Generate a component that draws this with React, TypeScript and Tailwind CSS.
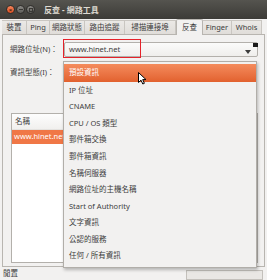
import React from "react";

const tabs = [
  { label: "裝置", w: 25 },
  { label: "Ping", w: 23 },
  { label: "網路狀態", w: 35 },
  { label: "路由追蹤", w: 40 },
  { label: "掃描連接埠", w: 51 },
  { label: "反查", w: 27, active: true },
  { label: "Finger", w: 29 },
  { label: "Whois", w: 30 },
];

const items = [
  "預設資訊",
  "IP 位址",
  "CNAME",
  "CPU / OS 類型",
  "郵件箱交換",
  "郵件箱資訊",
  "名稱伺服器",
  "網路位址的主機名稱",
  "Start of Authority",
  "文字資訊",
  "公認的服務",
  "任何 / 所有資訊",
];

export default function App() {
  return (
    <div className="relative w-[267px] h-[280px] overflow-hidden bg-[#f2f1f0] flex flex-col font-['Noto_Sans','Noto_Sans_CJK_TC',sans-serif] text-[7.5px] leading-none text-[#3c3c3c]">
      {/* Title bar */}
      <div className="h-[19px] shrink-0 flex items-center bg-gradient-to-b from-[#55544f] to-[#3c3b37] pl-[6px]">
        <div className="flex items-center gap-[1px]">
          <div className="w-[9px] h-[9px] rounded-full bg-gradient-to-b from-[#f5845a] to-[#d94f22] border border-[#2e2d2a] flex items-center justify-center">
            <span className="text-[6px] text-[#3c1a0c] font-bold leading-none">×</span>
          </div>
          <div className="w-[9px] h-[9px] rounded-full bg-gradient-to-b from-[#8b8a86] to-[#5d5c58] border border-[#2e2d2a] flex items-center justify-center">
            <div className="w-[4px] h-[1px] bg-[#3a3935]" />
          </div>
          <div className="w-[9px] h-[9px] rounded-full bg-gradient-to-b from-[#8b8a86] to-[#5d5c58] border border-[#2e2d2a] flex items-center justify-center">
            <div className="w-[4px] h-[4px] border border-[#3a3935]" />
          </div>
        </div>
        <div className="ml-[9px] text-[8px] font-bold text-[#dfdbd2]">反查 - 網路工具</div>
      </div>

      {/* Tabs */}
      <div className="h-[15px] shrink-0 flex items-end pl-[2px] relative z-10">
        {tabs.map((t) =>
          t.active ? (
            <div
              key={t.label}
              className="h-[16px] -mb-[1px] flex items-center justify-center bg-[#f2f1f0] border border-b-0 border-[#b8b5b0] rounded-t-[2px]"
              style={{ width: t.w }}
            >
              {t.label}
            </div>
          ) : (
            <div
              key={t.label}
              className="h-[14px] flex items-center justify-center bg-gradient-to-b from-[#ebe9e6] to-[#e0ddd9] border-r border-t border-[#c9c6c1]"
              style={{ width: t.w }}
            >
              {t.label}
            </div>
          )
        )}
      </div>

      {/* Panel */}
      <div className="h-[233px] shrink-0 mx-[2px] border border-[#b8b5b0] bg-[#f2f1f0] flex flex-col pl-[7px] pr-[6px] pt-[7px]">
        <div className="h-[15px] flex items-center">
          <div className="w-[54px]">網路位址(N)：</div>
          <div className="relative flex-1 h-[15px] border border-[#b3b0ab] rounded-[2px] bg-gradient-to-b from-[#fbfbfa] to-[#efeeec] flex items-center pl-[4px]">
            <span>www.hinet.net</span>
            <svg className="absolute right-[6px] top-[7px]" width="6" height="4" viewBox="0 0 6 4">
              <path d="M0 0 L6 0 L3 4 Z" fill="#3c3c3c" />
            </svg>
            <div className="absolute -right-[1px] top-0 w-[5px] h-[4px] bg-[#1a1a1a]" />
          </div>
        </div>
        <div className="h-[16px] mt-[8px] flex items-center">
          <div className="w-[54px]">資訊型態(I)：</div>
        </div>
        <div className="mt-[32px] ml-[1px] w-[247px] h-[150px] border border-[#b3b0ab] bg-white flex flex-col">
          <div className="h-[16px] flex items-center pl-[3px] border-b border-[#e4e2df] bg-gradient-to-b from-[#fdfdfd] to-[#f1f0ee]">名稱</div>
          <div className="h-[14px] flex items-center pl-[2px] bg-[#f07746] text-white">www.hinet.net</div>
        </div>
      </div>

      {/* Status bar */}
      <div className="flex-1 flex items-center pl-[3px] pr-[4px] justify-between">
        <span>閒置</span>
        <div className="w-[77px] h-[10px] mt-[3px] border border-[#c3c0bb] bg-[#e9e7e4]" />
      </div>

      {/* Red annotation box */}
      <div className="absolute left-[63px] top-[39px] w-[78px] h-[19px] border-[1.5px] border-[#e5222a] z-30 pointer-events-none" />

      {/* Dropdown menu */}
      <div className="absolute left-[63px] top-[61px] w-[194px] h-[207px] bg-[#f2f1f0] border border-[#b1aea9] shadow-[1px_2px_3px_rgba(0,0,0,0.25)] z-20 pt-[2px] flex flex-col">
        {items.map((it, i) =>
          i === 0 ? (
            <div
              key={it}
              className="h-[18px] shrink-0 flex items-center pl-[5px] bg-gradient-to-b from-[#f48b5c] to-[#e2612e] text-white"
            >
              {it}
            </div>
          ) : (
            <div key={it} className="h-[16.6px] shrink-0 flex items-center pl-[5px]">
              {it}
            </div>
          )
        )}
      </div>

      {/* Mouse cursor */}
      <svg className="absolute left-[138px] top-[72px] z-40" width="9" height="13" viewBox="0 0 9 13">
        <path d="M0.5 0.5 L0.5 10.5 L3 8.2 L4.8 12 L6.4 11.3 L4.7 7.6 L8 7.6 Z" fill="white" stroke="black" strokeWidth="1" strokeLinejoin="round" />
      </svg>
    </div>
  );
}
